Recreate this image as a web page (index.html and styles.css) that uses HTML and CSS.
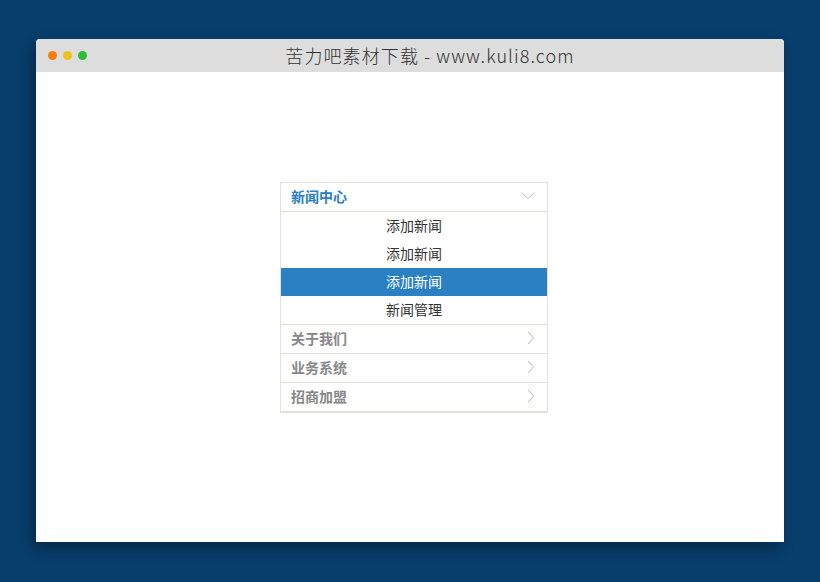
FILE: index.html
```html
<!DOCTYPE html>
<html lang="zh">
	<head>
		<title>苦力吧素材下载</title>
		<meta charset="utf-8">
		<link rel="stylesheet" href="styles.css">
	</head>
	<body>
		<div class="window">
			<div class="titlebar">
				<div class="dots">
					<span class="dot orange"></span>
					<span class="dot yellow"></span>
					<span class="dot green"></span>
				</div>
				<div class="title">苦力吧素材下载 - www.kuli8.com</div>
			</div>
			<div class="content">
				<ul class="menu">
					<li class="group open">
						<div class="head">新闻中心
							<svg class="arrow" width="14" height="8" viewBox="0 0 14 8"><polyline points="1,1 7,6.5 13,1" fill="none" stroke="#bbbbbb" stroke-width="1"/></svg>
						</div>
						<ul class="sub">
							<li>添加新闻</li>
							<li>添加新闻</li>
							<li class="active">添加新闻</li>
							<li>新闻管理</li>
						</ul>
					</li>
					<li class="group">
						<div class="head">关于我们
							<svg class="arrow" width="8" height="14" viewBox="0 0 8 14"><polyline points="1,1 6.5,7 1,13" fill="none" stroke="#bbbbbb" stroke-width="1"/></svg>
						</div>
					</li>
					<li class="group">
						<div class="head">业务系统
							<svg class="arrow" width="8" height="14" viewBox="0 0 8 14"><polyline points="1,1 6.5,7 1,13" fill="none" stroke="#bbbbbb" stroke-width="1"/></svg>
						</div>
					</li>
					<li class="group">
						<div class="head">招商加盟
							<svg class="arrow" width="8" height="14" viewBox="0 0 8 14"><polyline points="1,1 6.5,7 1,13" fill="none" stroke="#bbbbbb" stroke-width="1"/></svg>
						</div>
					</li>
				</ul>
			</div>
		</div>
	</body>
</html>
```

FILE: styles.css
```css
html, body {
	width: 100%;
	height: 100%;
}
body {
	margin: 0;
	background-color: #083e6c;
	font-family: "Noto Sans CJK SC", "Microsoft YaHei", sans-serif;
	overflow: hidden;
}
.window {
	margin: 39px 0 0 36px;
	width: 748px;
	height: 503px;
	background: #ffffff;
	border-radius: 4px 4px 0 0;
	box-shadow: -4px 6px 14px rgba(0,0,0,0.35);
	display: flex;
	flex-direction: column;
}
.titlebar {
	height: 33px;
	background: #dddddd;
	border-radius: 4px 4px 0 0;
	position: relative;
	display: flex;
	align-items: center;
	justify-content: center;
	padding-left: 40px;
}
.dots {
	position: absolute;
	left: 12px;
	top: 12px;
	display: flex;
	gap: 6px;
}
.dot {
	width: 9px;
	height: 9px;
	border-radius: 50%;
	display: block;
}
.orange { background: #f67e0c; }
.yellow { background: #eec21c; }
.green { background: #2bbf38; }
.title {
	font-size: 18px;
	font-weight: 300;
	color: #333333;
	letter-spacing: 1.1px;
	margin-top: -2px;
}
.content {
	flex: 1;
	padding: 110px 0 0 244px;
}
.menu {
	list-style: none;
	margin: 0;
	padding: 0;
	width: 268px;
	box-sizing: border-box;
	border: 1px solid #e2e2dc;
	border-bottom-width: 2px;
	font-size: 14px;
}
.group {
	border-bottom: 1px solid #e2e2dc;
}
.group:last-child {
	border-bottom: none;
}
.head {
	height: 28px;
	line-height: 26px;
	padding: 0 12px 2px 10px;
	box-sizing: border-box;
	font-weight: bold;
	color: #888888;
	display: flex;
	justify-content: space-between;
	align-items: center;
}
.open .head {
	height: 29px;
	color: #2a7ec2;
	border-bottom: 1px solid #e2e2dc;
}
.sub {
	list-style: none;
	margin: 0;
	padding: 0;
}
.sub li {
	height: 28px;
	line-height: 26px;
	text-align: center;
	color: #333333;
}
.sub li.active {
	background: #2a80c3;
	color: #ffffff;
}
```
